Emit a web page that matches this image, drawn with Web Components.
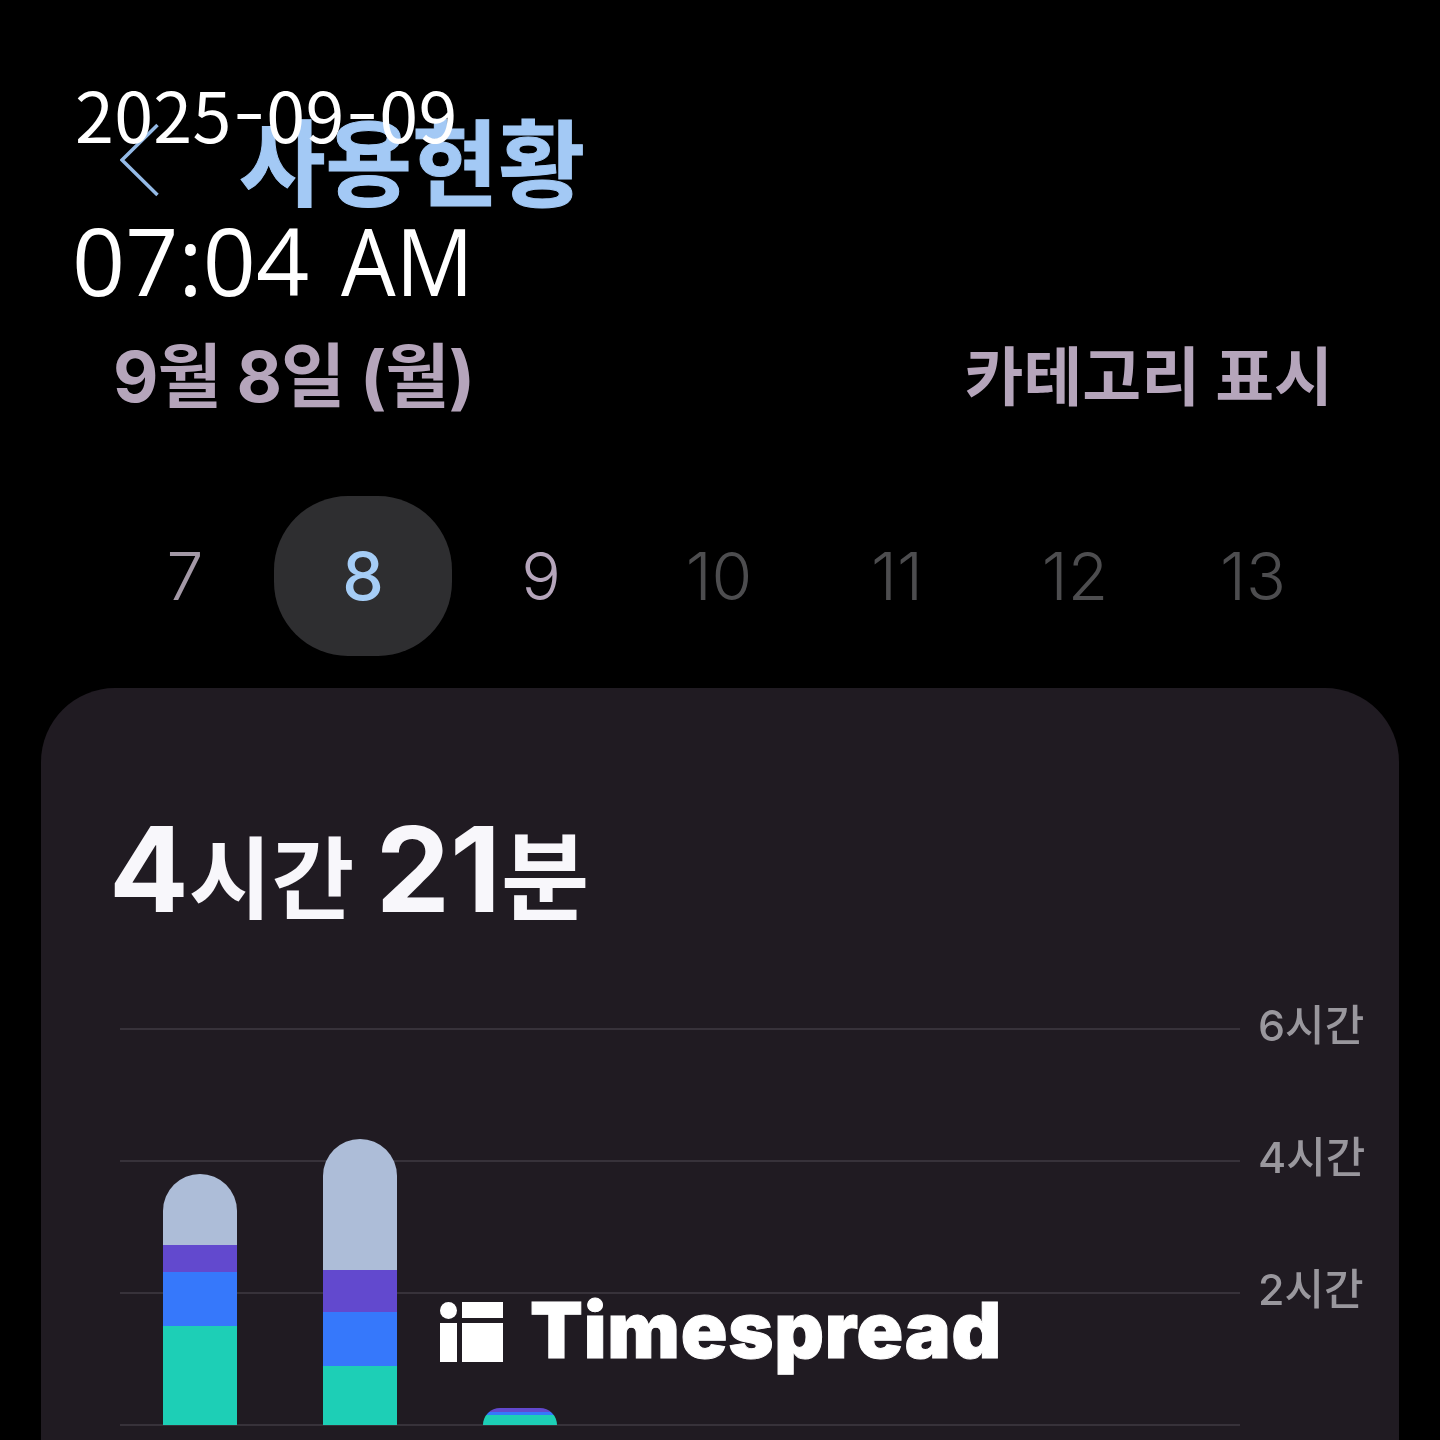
<!DOCTYPE html>
<html lang="ko">
<head>
<meta charset="utf-8">
<title>사용현황</title>
<style>
html,body{margin:0;background:#000}
</style>
</head>
<body>
<usage-screen>
  <usage-header slot="app" title-text="사용현황"></usage-header>
  <date-row slot="app" date="9월 8일 (월)" action="카테고리 표시"></date-row>
  <day-strip slot="app">
    <day-cell tone="mid">7</day-cell>
    <day-cell tone="active">8</day-cell>
    <day-cell tone="bright">9</day-cell>
    <day-cell tone="dim">10</day-cell>
    <day-cell tone="dim">11</day-cell>
    <day-cell tone="dim">12</day-cell>
    <day-cell tone="dim">13</day-cell>
  </day-strip>
  <usage-card slot="app">
    <usage-total><b>4</b><span>시간</span> <b>21</b><span class="wide">분</span></usage-total>
    <usage-chart>
      <chart-line>6시간</chart-line>
      <chart-line>4시간</chart-line>
      <chart-line>2시간</chart-line>
      <chart-line></chart-line>
      <stack-bar slot="bars" segments="71,27,54,99"></stack-bar>
      <stack-bar slot="bars" segments="131,42,54,59"></stack-bar>
      <stack-bar slot="bars" segments="0,4,3,10"></stack-bar>
    </usage-chart>
  </usage-card>
  <time-stamp slot="over" date="2025-09-09" time="07:04" meridiem="AM"></time-stamp>
  <brand-mark slot="over"></brand-mark>
</usage-screen>

<script>
const KR = '"Noto Sans CJK KR","Noto Sans",sans-serif';
const MIX = 'Inter,' + KR;
function def(name, html){
  customElements.define(name, class extends HTMLElement{
    constructor(){ super(); this.attachShadow({mode:'open'}); }
    connectedCallback(){ this.shadowRoot.innerHTML = typeof html==='function' ? html(this) : html; }
  });
}
def('usage-screen', `<style>
:host{display:block;width:1440px;height:1440px;position:relative;overflow:hidden;background:#000}
.app{display:flex;flex-direction:column;height:100%;filter:blur(.7px)}
</style><div class="app"><slot name="app"></slot></div><slot name="over"></slot>`);
def('usage-header', el=>`<style>
:host{display:flex;align-items:center;height:118px;margin-top:99px;padding-left:120px;gap:80px;font-family:${KR}}
svg{display:block;width:39px;height:74px;flex:none;position:relative;top:2px}
h1{margin:0;font-size:94px;line-height:118px;font-weight:700;color:#a3c9f5;-webkit-text-stroke:1px #a3c9f5}
</style><svg viewBox="0 0 39 74" fill="none"><path d="M37.5 2 2 37l35.5 35" stroke="#94bae6" stroke-width="3.5"/></svg><h1>${el.getAttribute('title-text')}</h1>`);
def('date-row', el=>`<style>
:host{display:flex;justify-content:space-between;align-items:center;height:90px;margin-top:118px;padding:0 107px 0 113px;font-family:${MIX};font-weight:700;line-height:90px;color:#b5a5bb}
.a{font-size:70px;position:relative;top:-3px;letter-spacing:-1px}
.b{font-size:64px;position:relative;top:-3px}
</style><span class="a">${el.getAttribute('date')}</span><span class="b">${el.getAttribute('action')}</span>`);
def('day-strip', `<style>
:host{display:grid;grid-template-columns:repeat(7,178px);height:160px;margin-top:71px;padding-left:96px}
</style><slot></slot>`);
def('day-cell', `<style>
:host{display:flex;align-items:center;justify-content:center;height:160px;font-family:Inter,sans-serif;font-size:66px;font-weight:350;border-radius:74px}
:host([tone=mid]){color:#a398a6}
:host([tone=bright]){color:#b5a5bb}
:host([tone=dim]){color:#4d4d4f}
:host([tone=active]){color:#a5cdf6;background:#2e2e30;font-weight:500}
</style><slot></slot>`);
def('usage-card', `<style>
:host{display:block;flex:none;box-sizing:border-box;margin:32px 41px 0;height:900px;padding:126px 0 0 68px;background:#201b22;border-radius:74px}
</style><slot></slot>`);
def('usage-total', `<style>
:host{display:block;height:110px;font-family:${MIX};color:#f8f7fb;line-height:110px;font-size:90px;font-weight:700;white-space:nowrap}
::slotted(b){font-size:118px;font-weight:700}
::slotted(span){font-size:90px;font-weight:700}
::slotted(.wide){font-size:96px;font-weight:700}
</style><slot></slot>`);
def('usage-chart', `<style>
:host{display:grid;margin:0 0 0 11px;padding-top:39px;width:1260px}
.lines,.bars{grid-area:1/1}
.lines{display:flex;flex-direction:column}
.bars{display:flex;align-items:flex-end;gap:86px;padding-left:43px;height:462px}
</style><div class="lines"><slot></slot></div><div class="bars"><slot name="bars"></slot></div>`);
def('chart-line', `<style>
:host{display:flex;align-items:center;gap:18px;height:132px;flex:none;font-family:${MIX};font-size:43px;font-weight:500;color:#99979d;line-height:60px;white-space:nowrap}
i{display:block;width:1120px;height:2px;background:#37323a;flex:none}
span{position:relative;top:-4px}
</style><i></i><span><slot></slot></span>`);
def('stack-bar', el=>{
  const s = el.getAttribute('segments').split(',').map(Number);
  const c = ['#adbdd8','#6249ce','#3678fb','#1dcfb6'];
  return `<style>
:host{display:flex;flex-direction:column;width:74px;border-radius:37px 37px 0 0;overflow:hidden}
div{flex:none}
</style>` + s.map((h,i)=>`<div style="height:${h}px;background:${c[i]}"></div>`).join('');
});
def('time-stamp', el=>{
  const d = el.getAttribute('date').split('-').join('<span class="h">-</span>');
  return `<style>
:host{position:absolute;left:75px;top:68px;color:#fff;display:flex;flex-direction:column;font-family:"Open Sans",sans-serif}
.d{font-family:"Noto Sans CJK KR","Noto Sans",sans-serif;font-size:70px;line-height:90px;height:90px;white-space:nowrap;letter-spacing:.3px}
.h{display:inline-block;margin:0 5px;transform:scaleX(1.3)}
.t{font-size:93px;line-height:124px;margin-top:40px;margin-left:-3px;white-space:nowrap;word-spacing:8px}
.m{display:inline-block;transform:scaleX(.93);transform-origin:left center}
</style><div class="d">${d}</div><div class="t">${el.getAttribute('time')} <span class="m">${el.getAttribute('meridiem')}</span></div>`;
});
def('brand-mark', `<style>
:host{position:absolute;left:440px;top:1302px;display:flex;align-items:center;gap:27px;color:#fff;font-family:Inter,sans-serif;font-weight:900;font-size:77px;line-height:60px;letter-spacing:.8px}
svg{display:block;width:63px;height:60px;flex:none}
span{position:relative;top:-2px;-webkit-text-stroke:1px #fff}
</style><svg viewBox="0 0 63 60" fill="#fff"><circle cx="8.5" cy="8.5" r="8.5"/><rect x="22" y="0" width="41" height="16"/><rect x="0" y="21" width="17" height="39"/><rect x="22" y="21" width="41" height="39"/></svg><span>Timespread</span>`);
</script>
</body>
</html>
